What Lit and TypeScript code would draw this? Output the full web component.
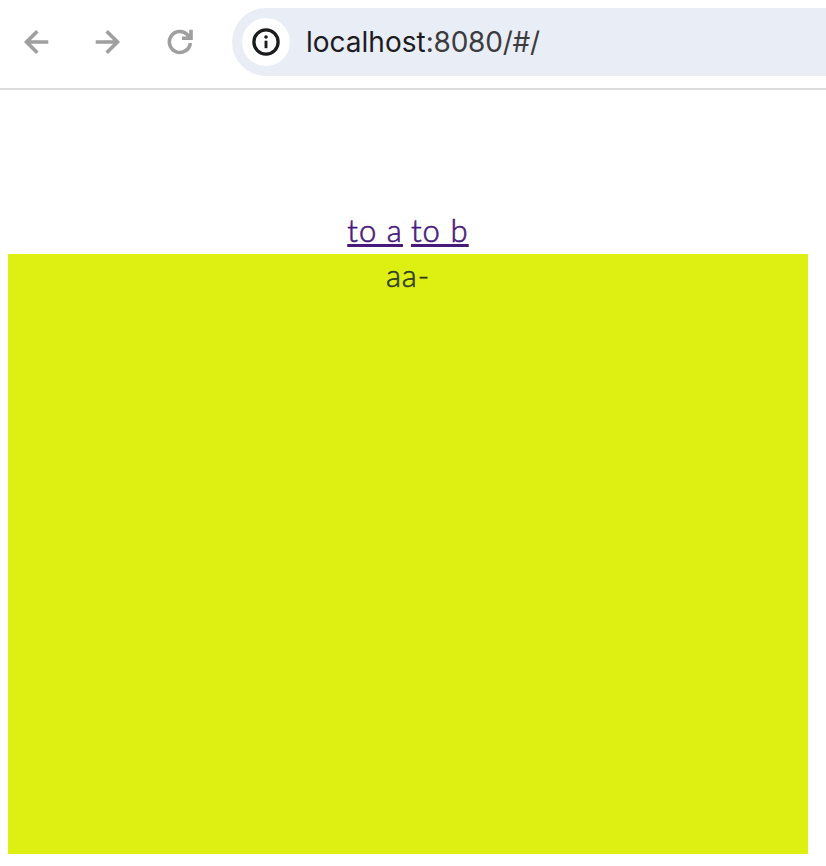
import { LitElement, html, css } from "lit";
import { customElement } from "lit/decorators.js";

@customElement("browser-bar")
class BrowserBar extends LitElement {
  static styles = css`
    :host { display: flex; box-sizing: border-box; height: 90px; padding: 8px 0 12px 16px; border-bottom: 2px solid #dcdcdc; background: #fff; }
    .nav { display: flex; align-items: center; gap: 32px; width: 216px; flex: none; }
    svg { display: block; fill: none; flex: none; }
    .nav svg { stroke: #9f9f9f; stroke-width: 3.6; }
    .address { display: flex; align-items: center; flex: 1; height: 68px; box-sizing: border-box; padding-left: 10px; border-radius: 34px 0 0 34px; background: #e9edf6; }
    .info { display: flex; align-items: center; justify-content: center; width: 48px; height: 48px; border-radius: 50%; background: #fff; }
    .url { margin-left: 16px; font: 400 28px/34px Inter, sans-serif; letter-spacing: -0.2px; color: #3c3c3e; white-space: pre; }
    .host { color: #1c1c1e; letter-spacing: 0; }
  `;
  render() {
    return html`
      <div class="nav">
        <svg width="40" height="40" viewBox="0 0 40 40"><path d="M32.3 20H10.5M21.3 9.2L10.5 20L21.3 30.8" /></svg>
        <svg width="40" height="40" viewBox="0 0 40 40"><path d="M7.7 20H29.5M18.7 9.2L29.5 20L18.7 30.8" /></svg>
        <svg width="40" height="40" viewBox="0 0 40 40"><path d="M30.3 21A10.5 10.5 0 1 1 27.6 12.9L30 16M31 7.8V16.2H22" /></svg>
      </div>
      <div class="address">
        <div class="info">
          <svg width="28" height="28" viewBox="0 0 28 28">
            <circle cx="14" cy="14" r="12.1" stroke="#1c1c1e" stroke-width="3.3" />
            <path d="M14 12.7V20.2" stroke="#1c1c1e" stroke-width="2.9" />
            <circle cx="14" cy="9" r="1.8" fill="#1c1c1e" />
          </svg>
        </div>
        <div class="url"><span class="host">localhost</span>:8080/#/</div>
      </div>
    `;
  }
}

@customElement("app-root")
class AppRoot extends LitElement {
  static styles = css`
    :host { display: block; box-sizing: border-box; height: 866px; overflow: hidden; background: #fff; font: 300 31px/40px Lato, sans-serif; color: #2c3e50; -webkit-text-stroke: 0.6px currentColor; }
    browser-bar { -webkit-text-stroke: 0; }
    .page { width: 800px; padding: 120px 0 0 8px; text-align: center; }
    .links { height: 44px; display: flex; justify-content: center; gap: 8px; }
    a { color: #48187c; text-decoration: underline; text-decoration-thickness: 2.5px; text-underline-offset: 2px; text-decoration-skip-ink: none; letter-spacing: 1.1px; }
    .panel { height: 600px; background: #def012; color: #2e3d22; letter-spacing: 0.9px; line-height: 42px; }
  `;
  render() {
    return html`
      <browser-bar></browser-bar>
      <main class="page">
        <nav class="links"><a href="#/a">to a</a><a href="#/b">to b</a></nav>
        <div class="panel">aa-</div>
      </main>
    `;
  }
}
